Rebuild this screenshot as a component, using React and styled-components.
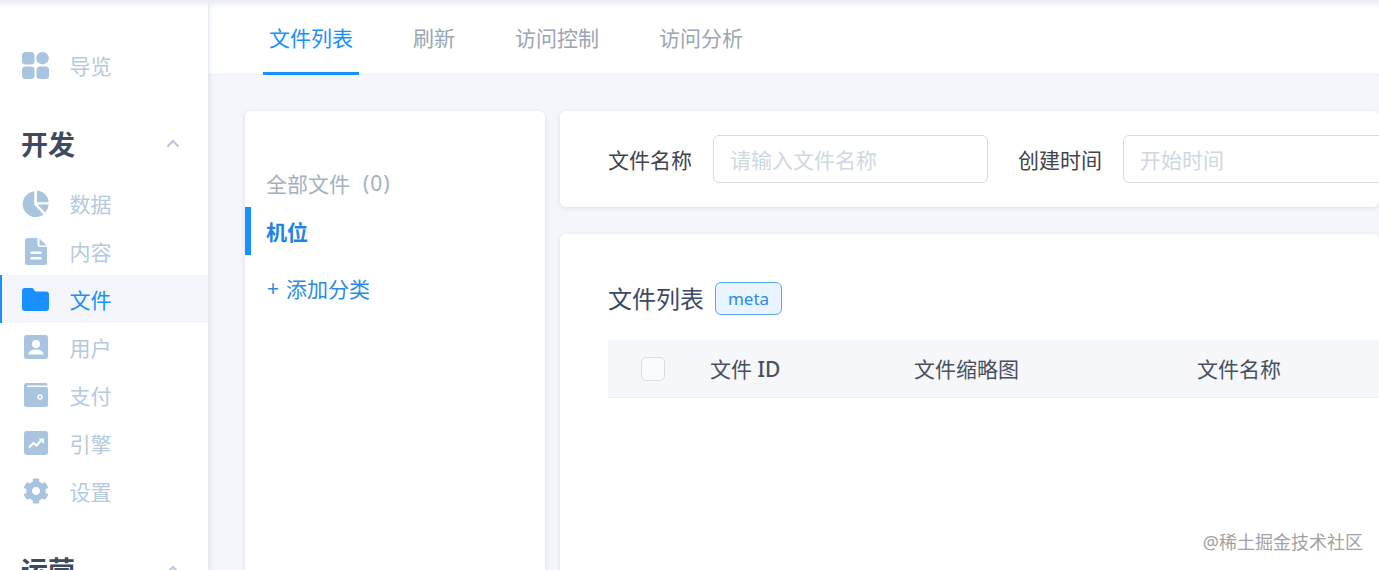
import styled, { createGlobalStyle } from "styled-components";
import { FaCog } from "react-icons/fa";

const GlobalStyle = createGlobalStyle`
  html, body {
    margin: 0;
    height: 100%;
    overflow: hidden;
    background: #f4f6fc;
    font-family: "Noto Sans", "Noto Sans CJK SC", sans-serif;
  }
  * { box-sizing: border-box; }
`;

const Shell = styled.div`
  position: relative;
  display: grid;
  grid-template-columns: 209px minmax(0, 1fr);
  height: 570px;
  overflow: hidden;

  &::before {
    content: "";
    position: absolute;
    top: 0;
    left: 0;
    right: 0;
    height: 9px;
    background: linear-gradient(#e9ecf4, rgba(255, 255, 255, 0));
    z-index: 2;
  }
`;

const Sidebar = styled.aside`
  background: #fff;
  border-right: 1px solid #e6e9f2;
  box-shadow: 1px 0 4px rgba(120, 135, 170, 0.14);
  padding-top: 41px;
  overflow: hidden;
  z-index: 1;
`;

const NavItem = styled.div`
  display: flex;
  align-items: center;
  height: 48px;
  padding-left: ${(p) => (p.$active ? "20px" : "22px")};
  font-size: 21px;
  color: ${(p) => (p.$active ? "#1890ff" : "#b5c9df")};
  background: ${(p) => (p.$active ? "#f4f6fc" : "transparent")};
  border-left: ${(p) => (p.$active ? "2px solid #1890ff" : "none")};
`;

const NavIcon = styled.span`
  display: flex;
  align-items: center;
  justify-content: center;
  width: 27px;
  height: 27px;
  margin-right: 20.5px;
  color: ${(p) => (p.$active ? "#1890ff" : "#a9c4de")};
`;

const GroupHead = styled.div`
  display: flex;
  align-items: center;
  justify-content: space-between;
  height: 48px;
  margin: ${(p) => p.$margin};
  padding: 0 28px 0 21px;
  font-size: 27px;
  font-weight: 700;
  color: #3d4a5f;
`;

const Main = styled.main`
  min-width: 0;
  display: flex;
  flex-direction: column;
`;

const TabBar = styled.nav`
  display: flex;
  gap: 48px;
  height: 75px;
  padding-left: 54px;
  background: #fff;
  border-bottom: 1px solid #eceff5;
  flex-shrink: 0;
`;

const Tab = styled.div`
  display: flex;
  align-items: center;
  height: 75px;
  padding: 2px 6px 0;
  font-size: 21px;
  color: ${(p) => (p.$active ? "#1890ff" : "#98a6b5")};
  border-bottom: 3px solid ${(p) => (p.$active ? "#1890ff" : "transparent")};
`;

const Content = styled.div`
  display: flex;
  gap: 15px;
  flex: 1;
  padding: 36px 0 0 36px;
  min-height: 0;
`;

const Card = styled.section`
  background: #fff;
  border-radius: 6px;
  box-shadow: 0 1px 4px rgba(120, 135, 170, 0.22);
`;

const CategoryCard = styled(Card)`
  width: 300px;
  flex-shrink: 0;
  padding-top: 48px;
  height: 560px;
`;

const CategoryRow = styled.div`
  display: flex;
  align-items: center;
  height: 48px;
  padding-left: ${(p) => (p.$active ? "15px" : "21px")};
  font-size: 21px;
  font-weight: ${(p) => (p.$active ? 700 : 400)};
  color: ${(p) => (p.$active ? "#1f83e6" : "#a3b1bf")};
  border-left: ${(p) => (p.$active ? "6px solid #1890ff" : "none")};
`;

const Count = styled.span`
  margin-left: 13px;
  letter-spacing: 1px;
`;

const AddRow = styled.div`
  display: flex;
  align-items: center;
  gap: 7px;
  height: 48px;
  margin-top: 9px;
  padding-left: 22px;
  font-size: 21px;
  color: #2d8ae6;
`;

const Right = styled.div`
  flex: 1;
  min-width: 0;
  display: flex;
  flex-direction: column;
  gap: 27px;
`;

const FilterCard = styled(Card)`
  display: flex;
  align-items: center;
  height: 96px;
  padding-left: 48px;
  white-space: nowrap;
  overflow: hidden;
`;

const FieldLabel = styled.label`
  font-size: 21px;
  color: #3f444d;
  margin-right: 21px;
  flex-shrink: 0;
`;

const FakeInput = styled.div`
  display: flex;
  align-items: center;
  flex-shrink: 0;
  width: ${(p) => p.$width}px;
  height: 48px;
  margin-right: 30px;
  padding-left: 16px;
  border: 1px solid #d5dbe3;
  border-radius: 6px;
  font-size: 21px;
  color: #cfd8e2;
`;

const ListCard = styled(Card)`
  flex: 1;
  padding: 48px 0 0 48px;
  min-height: 400px;
`;

const ListTitle = styled.div`
  display: flex;
  align-items: center;
  gap: 11px;
  height: 33px;
  font-size: 24px;
  line-height: 31px;
  color: #3d4a5f;
`;

const Tag = styled.span`
  display: flex;
  align-items: center;
  justify-content: center;
  width: 67px;
  height: 33px;
  border: 1px solid #5ba8ec;
  border-radius: 6px;
  background: #e8f4ff;
  font-size: 17px;
  color: #2d8ae6;
`;

const TableHead = styled.div`
  display: grid;
  grid-template-columns: 102px 204px 283px 1fr;
  align-items: center;
  height: 58px;
  margin-top: 25px;
  padding-bottom: 2px;
  background: #f5f7fa;
  border-bottom: 1px solid #ebeef5;
  font-size: 21px;
  color: #48505e;
  white-space: nowrap;
`;

const CheckCell = styled.div`
  display: flex;
  padding: 2px 0 0 33px;
`;

const Checkbox = styled.span`
  display: block;
  width: 24px;
  height: 24px;
  border: 1px solid #d9dde4;
  border-radius: 5px;
  background: #f9fafc;
`;

const IdMark = styled.span`
  font-weight: 500;
`;

const Watermark = styled.div`
  position: absolute;
  right: 16px;
  bottom: 16px;
  font-size: 18px;
  line-height: 24px;
  color: #a2a2a2;
  z-index: 3;
`;

const Nav = () => (
  <svg width="27" height="27" viewBox="0 0 27 27" fill="currentColor">
    <rect x="0" y="0" width="12.5" height="12.5" rx="3.5" />
    <circle cx="20.5" cy="6.2" r="6.2" />
    <rect x="0" y="14.5" width="12.5" height="12.5" rx="3.5" />
    <rect x="14.5" y="14.5" width="12.5" height="12.5" rx="3.5" />
  </svg>
);

const Pie = () => (
  <svg width="27" height="27" viewBox="0 0 27 27" fill="currentColor">
    <path d="M12.2 1.2v13.6l9.4 9.6A13 13 0 1 1 12.2 1.2z" />
    <path d="M15 .8A12 12 0 0 1 26.6 12.2H15z" />
    <path d="M15.6 14.6h11a12.6 12.6 0 0 1-3.4 8z" />
  </svg>
);

const Doc = () => (
  <svg width="22" height="27" viewBox="0 0 22 27" fill="currentColor">
    <path
      fillRule="evenodd"
      d="M2.5 0H12.500v7a2 2 0 0 0 2 2H22v15.500A2.500 2.500 0 0 1 19.500 27h-17A2.500 2.500 0 0 1 0 24.500v-22A2.500 2.500 0 0 1 2.500 0zM5.500 13.500v2.400h11v-2.400zm0 5.500v2.400h11V19z"
    />
    <path d="M14.500 .6L21.600 7.400H14.500z" />
  </svg>
);

const Folder = () => (
  <svg width="27" height="23" viewBox="0 0 27 23" fill="currentColor">
    <path d="M3 0h7.500l3 3.500H24a3 3 0 0 1 3 3V20a3 3 0 0 1-3 3H3a3 3 0 0 1-3-3V3a3 3 0 0 1 3-3z" />
  </svg>
);

const UserCard = () => (
  <svg width="24" height="24" viewBox="0 0 24 24" fill="currentColor">
    <path
      fillRule="evenodd"
      d="M3 0h18a3 3 0 0 1 3 3v18a3 3 0 0 1-3 3H3a3 3 0 0 1-3-3V3a3 3 0 0 1 3-3zm9 5a4 4 0 1 0 0 8 4 4 0 0 0 0-8zm-7.500 14.500h15c0-3.300-3.500-5-7.500-5s-7.500 1.700-7.500 5z"
    />
  </svg>
);

const Wallet = () => (
  <svg width="24" height="24" viewBox="0 0 24 24" fill="currentColor">
    <path
      fillRule="evenodd"
      d="M2.500 0h19a2 2 0 0 1 2 2v.500H3v1.600h19a2 2 0 0 1 2 2V21.500a2.500 2.500 0 0 1-2.500 2.500h-19A2.500 2.500 0 0 1 0 21.500v-19A2.500 2.500 0 0 1 2.500 0zM16 11.300a2.700 2.700 0 1 0 0 5.400 2.700 2.700 0 0 0 0-5.400zm0 1.500a1.200 1.200 0 1 1 0 2.400 1.200 1.200 0 0 1 0-2.400z"
    />
  </svg>
);

const Trend = () => (
  <svg width="24" height="24" viewBox="0 0 24 24" fill="currentColor">
    <path d="M3 0h18a3 3 0 0 1 3 3v18a3 3 0 0 1-3 3H3a3 3 0 0 1-3-3V3a3 3 0 0 1 3-3z" />
    <path
      d="M5 16.500l4.500-4.500 3 2.500 5-5.500"
      fill="none"
      stroke="#fff"
      strokeWidth="2.200"
    />
    <path d="M14.500 7.500H20V13z" fill="#fff" />
  </svg>
);

const Chevron = ({ color }) => (
  <svg width="14" height="9" viewBox="0 0 14 9" fill="none">
    <path d="M1.500 7.500L7 2l5.500 5.500" stroke={color} strokeWidth="2" />
  </svg>
);

const devItems = [
  { label: "数据", icon: <Pie /> },
  { label: "内容", icon: <Doc /> },
  { label: "文件", icon: <Folder />, active: true },
  { label: "用户", icon: <UserCard /> },
  { label: "支付", icon: <Wallet /> },
  { label: "引擎", icon: <Trend /> },
  { label: "设置", icon: <FaCog size={26} /> },
];

const tabs = ["文件列表", "刷新", "访问控制", "访问分析"];

function App() {
  return (
    <>
      <GlobalStyle />
      <Shell>
        <Sidebar>
          <NavItem>
            <NavIcon>
              <Nav />
            </NavIcon>
            导览
          </NavItem>
          <GroupHead $margin="30px 0 12px">
            开发
            <Chevron color="#b7c6d6" />
          </GroupHead>
          {devItems.map((item) => (
            <NavItem key={item.label} $active={item.active}>
              <NavIcon $active={item.active}>{item.icon}</NavIcon>
              {item.label}
            </NavItem>
          ))}
          <GroupHead $margin="30px 0 0">
            运营
            <Chevron color="#b7c6d6" />
          </GroupHead>
        </Sidebar>

        <Main>
          <TabBar>
            {tabs.map((tab, i) => (
              <Tab key={tab} $active={i === 0}>
                {tab}
              </Tab>
            ))}
          </TabBar>

          <Content>
            <CategoryCard>
              <CategoryRow>
                全部文件<Count>(0)</Count>
              </CategoryRow>
              <CategoryRow $active>机位</CategoryRow>
              <AddRow>
                <span>+</span>
                添加分类
              </AddRow>
            </CategoryCard>

            <Right>
              <FilterCard>
                <FieldLabel>文件名称</FieldLabel>
                <FakeInput $width={275}>请输入文件名称</FakeInput>
                <FieldLabel>创建时间</FieldLabel>
                <FakeInput $width={320}>开始时间</FakeInput>
              </FilterCard>

              <ListCard>
                <ListTitle>
                  文件列表
                  <Tag>meta</Tag>
                </ListTitle>
                <TableHead>
                  <CheckCell>
                    <Checkbox />
                  </CheckCell>
                  <span>
                    文件 <IdMark>ID</IdMark>
                  </span>
                  <span>文件缩略图</span>
                  <span>文件名称</span>
                </TableHead>
              </ListCard>
            </Right>
          </Content>
        </Main>

        <Watermark>@稀土掘金技术社区</Watermark>
      </Shell>
    </>
  );
}

export default App;
